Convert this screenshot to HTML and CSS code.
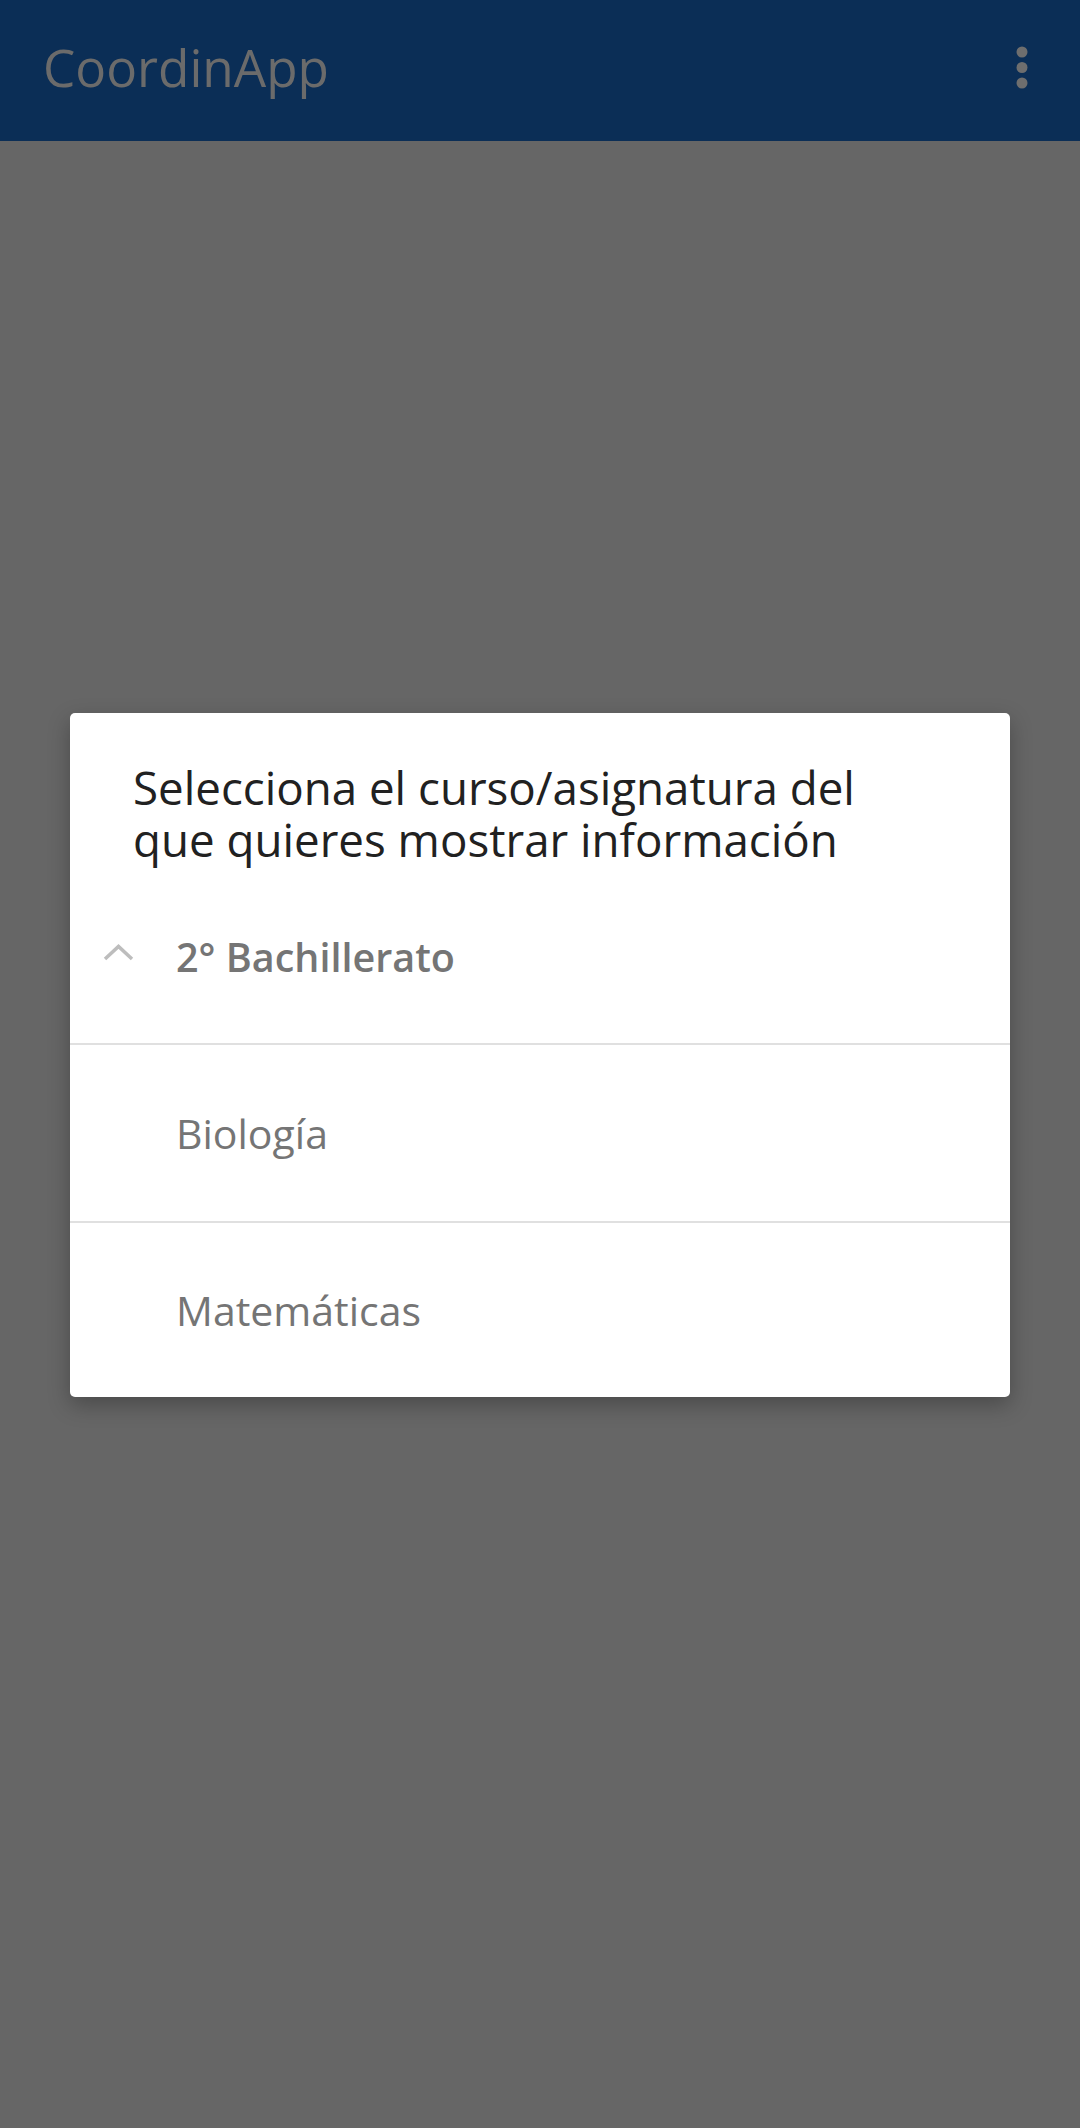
FILE: index.html
```html
<!DOCTYPE html>
<html lang="es">
<head>
<meta charset="utf-8">
<title>CoordinApp</title>
<link rel="stylesheet" href="styles.css">
</head>
<body>
<header class="appbar">
  <span class="appbar-title">CoordinApp</span>
  <svg class="appbar-menu" width="12" height="44" viewBox="0 0 12 44" aria-label="Más opciones">
    <circle cx="6" cy="6" r="5.5"/>
    <circle cx="6" cy="21.5" r="5.5"/>
    <circle cx="6" cy="37" r="5.5"/>
  </svg>
</header>
<main class="scrim">
  <section class="dialog">
    <h1 class="dialog-title">Selecciona el curso/asignatura del que quieres mostrar información</h1>
    <div class="group-row">
      <svg class="chevron" width="31" height="17" viewBox="0 0 31 17">
        <polyline points="2,15 15.5,2.5 29,15"/>
      </svg>
      <span class="group-label">2° Bachillerato</span>
    </div>
    <div class="divider"></div>
    <div class="item-row"><span class="item-label">Biología</span></div>
    <div class="divider"></div>
    <div class="item-row item-row-last"><span class="item-label">Matemáticas</span></div>
  </section>
</main>
</body>
</html>
```
FILE: styles.css
```css
html, body {
  margin: 0;
  padding: 0;
}
body {
  width: 1080px;
  height: 2128px;
  background: #666666;
  font-family: "Open Sans", "Noto Sans", sans-serif;
  overflow: hidden;
}
.appbar {
  height: 141px;
  background: #0b2e56;
  display: flex;
  align-items: flex-start;
  justify-content: space-between;
  padding: 0 52px 0 43px;
  box-sizing: border-box;
}
.appbar-title {
  color: #6b6b6b;
  font-size: 51.3px;
  line-height: 51.3px;
  margin-top: 41.5px;
}
.appbar-menu {
  fill: #6e6e6e;
  margin-top: 46px;
  display: block;
}
.scrim {
  padding: 572px 0 0 70px;
}
.dialog {
  width: 940px;
  background: #ffffff;
  border-radius: 5px;
  box-shadow: 0 8px 22px rgba(0, 0, 0, 0.28);
  overflow: hidden;
}
.dialog-title {
  margin: 0;
  height: 157px;
  box-sizing: border-box;
  padding: 48px 80px 0 63px;
  font-size: 45.7px;
  line-height: 52px;
  font-weight: 400;
  color: #212121;
}
.group-row {
  height: 173px;
  display: flex;
  align-items: center;
  padding-left: 33px;
}
.chevron {
  display: block;
  fill: none;
  stroke: #bdbdbd;
  stroke-width: 3.5;
  margin-top: -9px;
}
.group-label {
  margin-left: 42px;
  font-size: 39.5px;
  font-weight: 600;
  color: #757575;
}
.divider {
  height: 2px;
  background: #e0e0e0;
}
.item-row {
  height: 176px;
  display: flex;
  align-items: center;
  padding-left: 106px;
}
.item-row-last {
  height: 174px;
}
.item-label {
  font-size: 41px;
  color: #757575;
}
```
